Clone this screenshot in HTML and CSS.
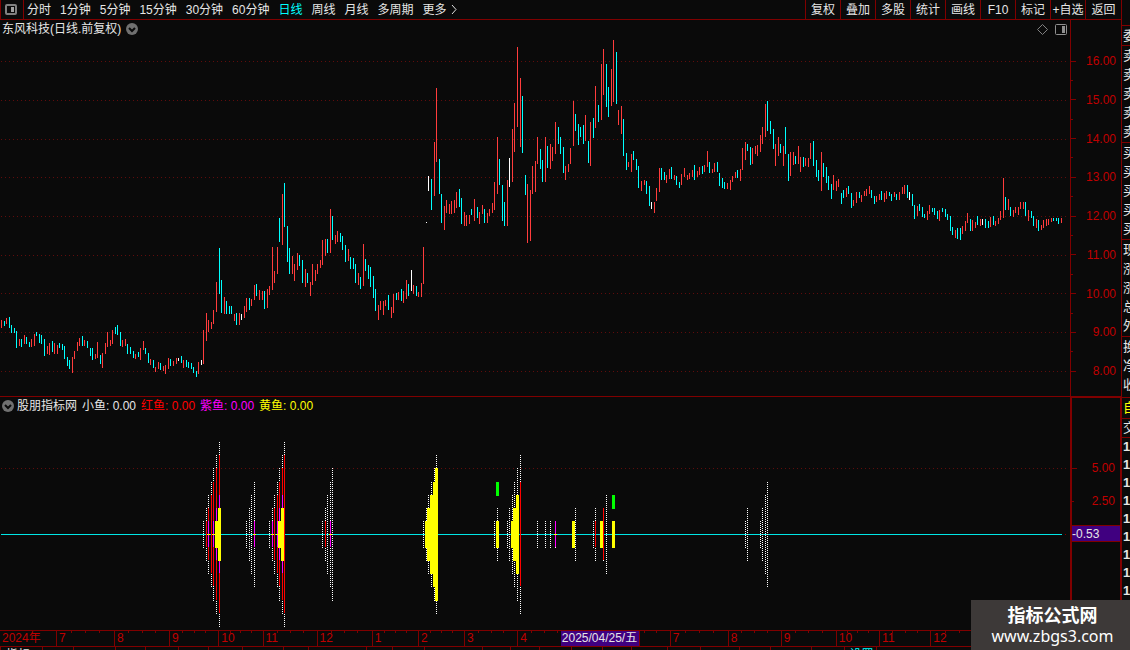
FILE: index.html
```html
<!DOCTYPE html>
<html lang="zh-CN">

<head>
    <meta charset="UTF-8">
    <meta name="viewport" content="width=device-width, initial-scale=1.0">
    <title>东风科技 日线</title>
    <link rel="stylesheet" href="styles.css">
</head>

<body>
    <div class="terminal">
        <main class="main">
            <header class="toolbar">
                <button class="layout-btn" aria-label="布局">
                    <svg width="12" height="11" viewBox="0 0 12 11">
                        <rect x="1" y="1" width="10" height="9" rx="1" fill="none" stroke="#808080" stroke-width="2" />
                        <rect x="6" y="3" width="3" height="5" fill="#a0a0a0" />
                    </svg>
                </button>
                <nav class="periods">
                    <button>分时</button>
                    <button>1分钟</button>
                    <button>5分钟</button>
                    <button>15分钟</button>
                    <button>30分钟</button>
                    <button>60分钟</button>
                    <button class="active">日线</button>
                    <button>周线</button>
                    <button>月线</button>
                    <button>多周期</button>
                    <button class="more">更多
                        <svg width="6" height="9" viewBox="0 0 6 9">
                            <path d="M1 0L5 4.500L1 9" fill="none" stroke="#e0e0e0" />
                        </svg>
                    </button>
                </nav>
                <div class="tools">
                    <button>复权</button>
                    <button>叠加</button>
                    <button>多股</button>
                    <button>统计</button>
                    <button>画线</button>
                    <button>F10</button>
                    <button>标记</button>
                    <button>+自选</button>
                    <button>返回</button>
                </div>
            </header>

            <section class="pane price">
                <div class="plot">
                    <svg class="chart" id="price-chart" viewBox="0 20 1070 376" preserveAspectRatio="none"></svg>
                    <div class="pane-title">
                        <span>东风科技(日线.前复权)</span>
                        <svg width="12" height="12" viewBox="0 0 12 12">
                            <circle cx="6" cy="6" r="6" fill="#707070" />
                            <path d="M3 5L6 8L9 5" fill="none" stroke="#0a0a0a" stroke-width="2" />
                        </svg>
                    </div>
                    <div class="pane-icons">
                        <svg width="11" height="11" viewBox="0 0 11 11">
                            <path d="M5.500 0.500L10.500 5.500L5.500 10.500L0.500 5.500Z" fill="none" stroke="#808080" />
                        </svg>
                        <svg width="12" height="11" viewBox="0 0 12 11">
                            <rect x="0.500" y="0.500" width="11" height="10" rx="1" fill="none" stroke="#909090" />
                            <rect x="7" y="2" width="3" height="7" fill="#909090" />
                        </svg>
                    </div>
                </div>
                <ul class="scale">
                    <li>16.00</li>
                    <li class="minor"></li>
                    <li>15.00</li>
                    <li class="minor"></li>
                    <li>14.00</li>
                    <li class="minor"></li>
                    <li>13.00</li>
                    <li class="minor"></li>
                    <li>12.00</li>
                    <li class="minor"></li>
                    <li>11.00</li>
                    <li class="minor"></li>
                    <li>10.00</li>
                    <li class="minor"></li>
                    <li>9.00</li>
                    <li class="minor"></li>
                    <li>8.00</li>
                </ul>
            </section>

            <section class="pane indicator">
                <div class="plot">
                    <svg class="chart" id="fish-chart" viewBox="0 397 1070 233" preserveAspectRatio="none"></svg>
                    <div class="pane-title">
                        <div class="source">
                            <svg width="12" height="12" viewBox="0 0 12 12">
                                <circle cx="6" cy="6" r="6" fill="#707070" />
                                <path d="M3 5L6 8L9 5" fill="none" stroke="#0a0a0a" stroke-width="2" />
                            </svg>
                            <span>股朋指标网</span>
                        </div>
                        <span>小鱼: 0.00</span>
                        <span class="red">红鱼: 0.00</span>
                        <span class="magenta">紫鱼: 0.00</span>
                        <span class="yellow">黄鱼: 0.00</span>
                    </div>
                </div>
                <ul class="scale">
                    <li>5.00</li>
                    <li class="short">2.50</li>
                    <li class="tag">-0.53</li>
                </ul>
            </section>

            <div class="time-axis">
                <ol id="months"></ol>
                <span class="date-tag">2025/04/25/五</span>
            </div>

            <div class="bottom-tabs" id="bottom-tabs"></div>
        </main>

        <aside class="quotes">
            <ul>
                <li>委</li>
            </ul>
            <ul>
                <li>卖</li>
                <li>卖</li>
                <li>卖</li>
                <li>卖</li>
                <li>卖</li>
            </ul>
            <ul>
                <li>买</li>
                <li>买</li>
                <li>买</li>
                <li>买</li>
                <li>买</li>
            </ul>
            <ul>
                <li>现</li>
                <li>涨</li>
                <li>涨</li>
                <li>总</li>
                <li>外</li>
            </ul>
            <ul class="extra">
                <li>换</li>
                <li>净</li>
                <li>收</li>
            </ul>
            <ul class="yellow">
                <li>自</li>
            </ul>
            <ul class="deal">
                <li>交</li>
            </ul>
            <ul class="ticks">
                <li>1</li>
                <li>1</li>
                <li>1</li>
                <li>1</li>
                <li>1</li>
                <li>1</li>
                <li>1</li>
                <li>1</li>
                <li>1</li>
            </ul>
        </aside>
    </div>

    <div class="watermark">
        <strong>指标公式网</strong>
        <span>www.zbgs3.com</span>
    </div>

    <script src="chart.js"></script>
</body>

</html>
```

FILE: styles.css
```css
* {
    box-sizing: border-box;
}

body {
    margin: 0;
    background: #0a0a0a;
    color: #e6e6e6;
    font-family: "Liberation Sans", "Noto Sans CJK SC", sans-serif;
    font-size: 12px;
    overflow: hidden;
}

ul,
ol {
    list-style: none;
    margin: 0;
    padding: 0;
}

button {
    padding: 0;
    border: 0;
    background: none;
    color: inherit;
    font: inherit;
    white-space: nowrap;
    cursor: pointer;
}

svg {
    display: block;
}

.terminal {
    display: flex;
    height: 100vh;
}

.main {
    flex: 1;
    min-width: 0;
    display: flex;
    flex-direction: column;
}

/* toolbar */
.toolbar {
    display: flex;
    flex: none;
    height: 20px;
    border-bottom: 1px solid #800000;
    line-height: 20px;
}

.toolbar .layout-btn {
    width: 24px;
    display: flex;
    align-items: center;
    justify-content: center;
    padding-right: 2px;
    border-left: 1px solid #800000;
    border-right: 1px solid #800000;
}

.periods {
    flex: 1;
    display: flex;
    gap: 9px;
    padding-left: 3px;
}

.periods .active {
    color: #00ffff;
}

.more {
    display: flex;
    align-items: center;
    gap: 4px;
}

.tools {
    display: flex;
}

.tools button {
    width: 35px;
    border-left: 1px solid #800000;
}

.tools button:last-child {
    width: 36px;
}

/* panes */
.pane {
    display: flex;
    min-height: 0;
}

.price {
    flex: 377 1 0;
    border-bottom: 1px solid #800000;
}

.indicator {
    flex: 233 1 0;
}

.plot {
    position: relative;
    flex: 1;
    min-width: 0;
}

.chart {
    width: 100%;
    height: 100%;
    shape-rendering: crispEdges;
}

.pane-title {
    position: absolute;
    top: 0;
    left: 2px;
    display: flex;
    align-items: center;
    gap: 5px;
    line-height: 18px;
}

.source {
    display: flex;
    align-items: center;
    gap: 3px;
}

.pane-icons {
    position: absolute;
    top: 4px;
    right: 3px;
    display: flex;
    gap: 7px;
}

.red {
    color: #ff0000;
}

.magenta {
    color: #ff00ff;
}

.yellow {
    color: #ffff00;
}

.scale {
    flex: none;
    display: flex;
    flex-direction: column;
    width: 51px;
    border-left: 1px solid #800000;
    color: #c00000;
}

.scale li {
    display: flex;
    align-items: center;
    justify-content: space-between;
    height: 18px;
    padding-right: 5px;
}

.scale li::before {
    content: "";
    width: 5px;
    height: 1px;
    background: #800000;
}

.scale .minor::before,
.scale .short::before {
    width: 2px;
}

.price .scale {
    justify-content: space-between;
    padding: 32px 0 16px;
}

.indicator .scale {
    gap: 15px;
    padding-top: 61px;
    border: 1px solid #800000;
    border-left-width: 2px;
    border-bottom: 0;
}

.scale .tag {
    height: 17px;
    justify-content: flex-start;
    border: 1px solid #800000;
    border-width: 1px 0;
    background: #400080;
    color: #e6e6e6;
}

.scale .tag::before {
    display: none;
}

/* time axis */
.time-axis {
    position: relative;
    flex: none;
    height: 17px;
    border-top: 1px solid #800000;
    border-bottom: 1px solid #800000;
    color: #c00000;
    line-height: 15px;
}

.time-axis ol {
    display: flex;
}

.time-axis li {
    flex-basis: 0;
    min-width: 0;
    height: 15px;
    text-indent: 2px;
    border-left: 1px solid #800000;
    white-space: nowrap;
    background-image: linear-gradient(#800000, #800000), linear-gradient(#800000, #800000), linear-gradient(#800000, #800000);
    background-repeat: no-repeat;
    background-size: 1px 2px;
    background-position: 25% 0, 50% 0, 75% 0;
}

.time-axis li:first-child {
    background: none;
    border-left: 0;
}

.date-tag {
    position: absolute;
    top: 0;
    left: 50%;
    width: 79px;
    border-right: 1px solid #800000;
    background: #400080;
    color: #e6e6e6;
    text-align: center;
    white-space: nowrap;
}

.bottom-tabs {
    display: flex;
    flex: none;
    height: 3px;
    overflow: hidden;
}

.bottom-tabs span {
    flex-basis: 0;
    min-width: 0;
    text-indent: 5px;
    border-left: 1px solid #800000;
    line-height: 16px;
    white-space: nowrap;
}

.bottom-tabs .cyan {
    color: #00ffff;
}

/* quote column */
.quotes {
    flex: none;
    width: 9px;
    padding-top: 25px;
    border-left: 1px solid #800000;
    overflow: hidden;
}

.quotes ul {
    padding: 0 0 1px 1px;
    border-top: 1px solid #800000;
}

.quotes ul:first-child {
    padding-bottom: 0;
}

.quotes li {
    height: 19px;
    line-height: 19px;
    font-size: 13px;
    white-space: nowrap;
}

.quotes .extra {
    padding-bottom: 3px;
}

.quotes .deal {
    padding-bottom: 0;
}

.quotes .deal li,
.quotes .ticks li {
    height: 18px;
    line-height: 18px;
}

.quotes .ticks {
    font-weight: bold;
}

.watermark {
    position: fixed;
    right: 0;
    bottom: 0;
    display: flex;
    flex-direction: column;
    align-items: center;
    gap: 1px;
    width: 159px;
    height: 50px;
    padding: 5px 0 0 4px;
    background: #3d3938;
    color: #ffffff;
    font-family: "Noto Sans", "Noto Sans CJK SC", sans-serif;
    font-size: 16px;
    line-height: 20px;
}

.watermark strong {
    font-size: 18px;
}
```

FILE: chart.js
```js
var RED = '#ff3c3c', CYAN = '#00ffff', WHITE = '#ffffff';

// x, high, low
var up = [
    [1,320,328],[6,318,324],[19,339,346],[24,335,344],[31,339,347],[34,334,346],[47,346,354],[49,343,355],
    [54,343,354],[57,345,354],[72,357,373],[74,351,359],[77,342,351],[79,338,346],[84,340,346],[95,354,359],
    [97,342,358],[102,353,368],[105,343,354],[107,332,347],[110,340,346],[112,330,344],[122,340,347],[125,339,346],
    [135,354,359],[140,348,360],[143,341,350],[150,359,365],[155,367,372],[158,362,369],[163,366,371],[165,365,374],
    [168,358,369],[173,361,366],[176,358,364],[183,360,368],[198,362,374],[203,330,364],[206,313,341],[208,320,332],
    [211,322,329],[213,310,324],[216,282,312],[224,297,314],[234,314,321],[239,313,325],[244,306,318],[246,298,312],
    [251,299,306],[254,285,300],[259,290,300],[262,291,300],[267,289,308],[269,286,295],[272,247,290],[274,271,283],
    [277,247,274],[282,194,245],[292,256,274],[294,264,281],[297,253,270],[305,269,287],[310,282,296],[312,264,285],
    [315,270,281],[317,264,274],[320,260,268],[322,240,265],[325,239,256],[330,209,253],[335,235,244],[337,231,242],
    [348,249,261],[358,273,285],[363,244,286],[378,305,320],[380,301,310],[383,301,315],[385,300,306],[391,307,318],
    [393,294,313],[398,292,300],[403,291,303],[406,280,299],[413,285,294],[418,292,297],[421,283,297],[423,247,284],
    [434,142,196],[436,88,162],[444,206,230],[446,200,213],[449,204,214],[451,201,214],[454,200,213],[456,192,208],
    [464,212,226],[466,215,226],[469,215,224],[474,199,221],[479,212,224],[482,205,214],[487,213,223],[489,209,216],
    [492,203,213],[494,182,210],[497,137,194],[507,180,226],[512,129,182],[514,103,152],[517,47,127],[520,78,147],
    [527,184,243],[530,190,241],[532,166,194],[535,161,192],[537,137,164],[545,137,182],[550,144,169],[552,147,161],
    [555,122,154],[565,166,180],[568,164,172],[570,148,164],[573,101,146],[585,115,141],[590,122,166],[595,86,128],
    [601,64,120],[603,49,95],[611,69,106],[613,40,102],[618,110,125],[621,106,134],[628,162,167],[631,154,172],
    [641,181,191],[644,180,185],[654,202,213],[656,188,201],[659,168,192],[666,175,183],[669,169,179],[674,175,180],
    [681,174,185],[684,168,177],[687,175,180],[689,173,179],[692,170,177],[697,171,177],[699,167,175],[704,165,172],
    [707,151,167],[712,169,173],[714,163,172],[727,183,189],[730,180,190],[732,176,182],[735,172,178],[740,169,181],
    [742,148,170],[745,142,160],[752,148,164],[755,146,154],[757,145,156],[760,135,152],[762,127,144],[765,104,137],
    [775,144,166],[778,137,156],[783,146,166],[790,152,176],[793,152,165],[798,146,164],[800,157,172],[805,158,166],
    [808,158,167],[810,143,159],[821,152,191],[833,175,190],[836,181,191],[838,179,187],[846,188,197],[853,200,206],
    [856,192,203],[861,195,202],[864,191,196],[866,189,196],[869,186,194],[876,196,202],[879,194,200],[884,193,202],
    [886,191,199],[894,192,197],[899,192,200],[902,187,194],[904,185,194],[917,206,216],[927,211,220],[929,205,214],
    [939,210,221],[955,230,238],[962,226,234],[965,221,231],[967,213,223],[972,220,231],[975,222,228],[980,219,226],
    [990,217,227],[995,221,226],[998,218,224],[1000,211,220],[1003,178,218],[1008,199,210],[1013,210,217],[1015,207,213],
    [1018,207,215],[1020,202,209],[1023,202,209],[1028,210,221],[1036,219,228],[1041,225,230],[1043,220,228],
    [1046,219,226],[1048,219,225],[1051,218,222],[1061,218,223]
];

var down = [
    [4,321,326],[9,317,328],[11,325,333],[14,328,333],[16,331,348],[21,339,347],[26,337,344],[29,342,347],
    [36,332,336],[39,334,343],[41,335,344],[44,339,356],[52,341,352],[59,343,348],[62,344,350],[64,346,359],
    [67,357,366],[69,360,369],[82,336,346],[87,341,348],[90,348,356],[92,348,360],[100,355,364],[115,327,334],
    [117,325,335],[120,332,346],[127,344,354],[130,347,354],[133,351,358],[138,352,357],[145,348,354],[148,353,363],
    [153,360,368],[160,363,370],[170,359,366],[181,356,363],[186,360,367],[188,362,368],[191,363,369],[193,367,373],
    [196,371,377],[219,248,294],[221,280,313],[226,301,314],[229,306,314],[231,306,314],[236,313,325],[249,298,310],
    [256,284,296],[264,291,309],[279,218,242],[284,183,227],[287,226,262],[289,248,274],[299,255,266],[302,260,283],
    [307,273,283],[327,239,253],[332,216,240],[340,233,242],[342,236,250],[345,245,262],[350,257,269],[353,258,269],
    [355,264,283],[360,277,289],[365,259,271],[368,265,279],[370,267,287],[373,276,298],[375,289,311],[388,295,310],
    [396,293,300],[401,289,301],[408,284,296],[416,286,296],[431,179,210],[439,159,194],[441,194,223],[459,189,207],
    [461,198,224],[471,209,215],[477,207,218],[484,209,223],[499,159,185],[502,185,221],[504,202,226],[522,96,153],
    [525,175,195],[540,149,169],[542,160,182],[547,146,168],[558,127,144],[560,137,154],[563,147,173],[575,114,131],
    [578,124,145],[580,127,137],[583,125,144],[588,141,163],[593,118,138],[598,105,122],[606,64,107],[608,87,117],
    [616,52,104],[623,119,156],[626,153,170],[633,151,160],[636,159,170],[638,166,188],[646,181,194],[649,186,206],
    [661,168,180],[664,172,180],[671,167,179],[676,176,185],[679,182,188],[694,165,180],[702,166,174],[709,162,173],
    [717,162,172],[719,173,186],[722,178,188],[724,182,189],[737,170,178],[747,144,151],[750,147,165],[767,101,131],
    [770,121,134],[773,129,149],[780,144,153],[785,127,154],[788,154,181],[795,156,164],[803,157,167],[813,141,166],
    [816,160,177],[818,170,181],[823,163,177],[826,167,183],[828,176,190],[831,184,199],[841,193,204],[843,190,198],
    [848,186,194],[851,193,208],[859,192,198],[871,190,198],[874,196,204],[881,191,200],[889,192,196],[891,194,201],
    [896,194,200],[907,185,198],[912,194,206],[914,205,219],[919,204,211],[922,207,217],[924,214,218],[932,208,212],
    [934,208,215],[937,211,219],[942,208,212],[945,209,217],[947,214,220],[950,216,231],[952,227,235],[957,228,239],
    [960,228,240],[970,219,231],[977,216,225],[985,219,228],[988,221,228],[993,216,225],[1005,197,210],[1010,207,216],
    [1025,202,216],[1031,211,218],[1033,216,226],[1038,220,231],[1053,218,221],[1056,218,221],[1058,218,224]
];

var flat = [
    [178,358,361],[201,360,365],[241,314,320],[411,270,291],[426,222,223],[428,176,191],[509,158,187],
    [651,202,209],[909,192,200],[982,219,225]
];

// top and bottom of the fish bars for each level
var levels = [null, [521,548], [508,561], [495,574], [482,587], [468,601], [455,614], [442,627]];

// x, white, red, magenta, yellow level
var fish = [
    [203,1,0,0,0],[206,2,1,0,0],[208,3,2,1,0],[211,4,3,0,0],[213,5,4,1,0],[216,6,5,2,1],[219,7,6,3,2],
    [246,1,0,0,0],[249,2,0,0,0],[251,3,0,0,0],[254,4,0,1,0],
    [269,1,0,0,0],[272,2,0,1,0],[274,3,2,0,0],[277,4,3,1,0],[279,5,4,2,1],[282,6,5,3,2],[284,7,6,0,0],
    [322,1,0,0,0],[325,2,1,0,0],[327,3,0,0,0],[330,4,0,1,0],[332,5,0,0,0],
    [423,1,0,0,0],[426,2,0,0,1],[428,3,0,0,2],[431,4,0,0,3],[434,5,0,0,4],[436,6,0,0,5],
    [494,1,0,0,0],[497,2,0,0,1],
    [507,1,0,0,0],[509,2,0,0,0],[512,3,0,0,1],[514,4,0,0,2],[517,5,0,0,3],[520,6,4,0,0],
    [537,1,0,0,0],[545,1,0,0,0],[550,1,0,0,0],[555,1,0,1,0],
    [573,1,0,0,1],[575,2,0,0,0],
    [593,1,0,0,0],[595,2,1,0,0],[601,1,0,0,1],[603,2,2,0,0],[606,3,0,0,0],[613,1,0,0,1],
    [745,1,0,0,0],[747,2,0,0,0],[760,1,0,0,0],[762,2,0,0,0],[765,3,0,0,0],[767,4,0,0,0]
];

function rect(x, y, w, h) {
    return 'M' + x + ' ' + y + 'h' + w + 'v' + h + 'h-' + w + 'z';
}

function addPath(svg, d, color) {
    var path = document.createElementNS('http://www.w3.org/2000/svg', 'path');
    path.setAttribute('d', d);
    path.setAttribute('fill', color);
    svg.appendChild(path);
}

function bars(list) {
    return list.map(function (b) {
        return rect(b[0], b[1], 1, b[2] - b[1]);
    }).join('');
}

function dotRow(y) {
    var d = '';
    for (var x = 1; x < 1068; x += 4) {
        d += rect(x, y, 1, 1);
    }
    return d;
}

function dotColumn(x, y1, y2) {
    var d = '';
    for (var y = y1; y < y2; y += 2) {
        d += rect(x, y, 1, 1);
    }
    return d;
}

// price chart
var price = document.getElementById('price-chart');
addPath(price, [61, 100, 139, 177, 216, 255, 293, 332, 371].map(dotRow).join(''), '#600c0c');
addPath(price, bars(up), RED);
addPath(price, bars(down), CYAN);
addPath(price, bars(flat), WHITE);

// indicator chart
var chart = document.getElementById('fish-chart');
addPath(chart, dotRow(468), '#600c0c');
addPath(chart, rect(1, 534, 1061, 1), '#00e6e6');
addPath(chart, rect(1065, 534, 1, 1), '#800000');
var white = '', red = '', magenta = '', yellow = '';
fish.forEach(function (f) {
    var x = f[0], lv = levels[f[1]];
    white += dotColumn(x, lv[0], lv[1]);
    if (f[2]) {
        lv = levels[f[2]];
        red += rect(x, lv[0], 1, lv[1] - lv[0] - 1);
    }
    if (f[3]) {
        lv = levels[f[3]];
        magenta += rect(x, lv[0], 1, lv[1] - lv[0] - 1);
        yellow += rect(x - 1, 534, 3, 1);
    }
    if (f[4]) {
        lv = levels[f[4]];
        yellow += rect(x - 1, lv[0], 3, lv[1] - lv[0]);
    }
});
addPath(chart, white, WHITE);
addPath(chart, red, '#ff0000');
addPath(chart, magenta, '#ff00ff');
addPath(chart, yellow, '#ffff00');
addPath(chart, rect(496, 482, 3, 14) + rect(612, 495, 3, 14), '#00ff00');

// month cells: label, width
var months = [
    ['2024年', 57], ['7', 58], ['8', 55], ['9', 49], ['10', 44], ['11', 54], ['12', 55], ['1', 46], ['2', 46],
    ['3', 53], ['4', 54], ['', 47], ['', 51], ['7', 58], ['8', 53], ['9', 55], ['10', 43], ['11', 51], ['12', 58],
    ['', 134]
];
document.getElementById('months').innerHTML = months.map(function (m) {
    return '<li style="flex-grow:' + m[1] + '">' + m[0] + '</li>';
}).join('');

// bottom tabs: width, label, class
var tabs = [
    [42, '指标A'], [31, ''], [42, ''], [29, ''], [33, ''], [30, ''], [34, ''], [41, ''], [24, ''], [58, ''], [26, ''],
    [32, ''], [58, ''], [28, ''], [28, ''], [32, ''], [31, ''], [29, ''], [35, ''], [33, ''], [39, ''], [31, ''],
    [41, ''], [32, ''], [32, '设置', 'cyan'], [250, '']
];
document.getElementById('bottom-tabs').innerHTML = tabs.map(function (t) {
    return '<span class="' + (t[2] || 'tab') + '" style="flex-grow:' + t[0] + '">' + t[1] + '</span>';
}).join('');
```
